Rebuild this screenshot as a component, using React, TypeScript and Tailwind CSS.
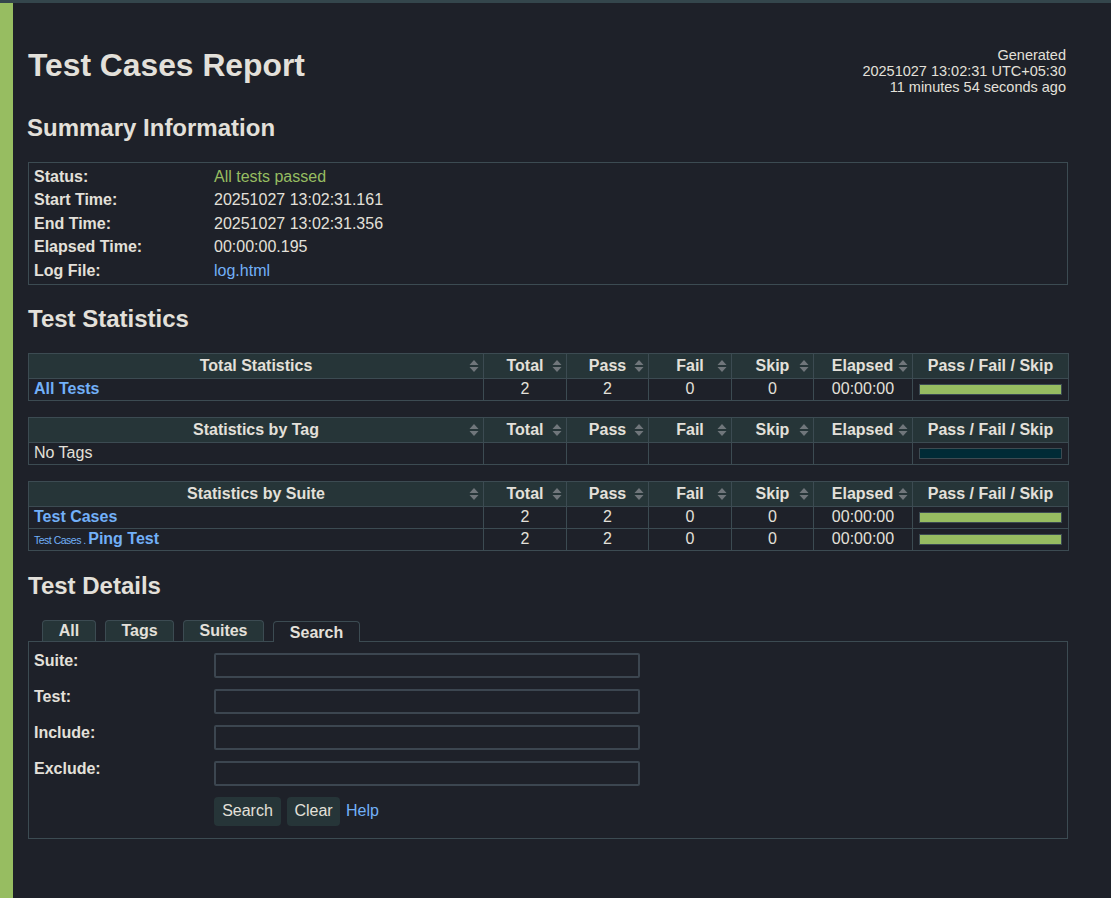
import React from 'react';

const font = "font-['Liberation_Sans',Arial,sans-serif]";

const SortIcon: React.FC = () => (
    <svg className="absolute right-[4px] top-1/2 -translate-y-1/2" width="10" height="13" viewBox="0 0 10 13">
        <path d="M5 0.5 L9.5 5.5 L0.5 5.5 Z" fill="#70767b" />
        <path d="M5 12.5 L9.5 7.5 L0.5 7.5 Z" fill="#70767b" />
    </svg>
);

const Bar: React.FC<{ pass: boolean }> = ({ pass }) => (
    <div className={`mx-auto h-[11px] w-[143px] border border-[#3c4b52] ${pass ? 'bg-[#97bd61]' : 'bg-[#002b36]'}`} />
);

type Row = { name: React.ReactNode; total?: string; pass?: string; fail?: string; skip?: string; elapsed?: string; bar: boolean };

const StatTable: React.FC<{ title: string; rows: Row[] }> = ({ title, rows }) => {
    const cols = ['Total', 'Pass', 'Fail', 'Skip', 'Elapsed'];
    const widths = ['w-[83px]', 'w-[82px]', 'w-[83px]', 'w-[82px]', 'w-[99px]'];
    return (
        <table className="w-[1040px] table-fixed border-collapse text-[16px] leading-[18px]">
            <colgroup>
                <col className="w-[455px]" />
                {widths.map((w, i) => <col key={i} className={w} />)}
                <col className="w-[156px]" />
            </colgroup>
            <thead>
                <tr className="h-[25px] bg-[#263538]">
                    <th className="relative border border-[#3c4b52] font-bold text-[#e3e0da]">
                        {title}
                        <SortIcon />
                    </th>
                    {cols.map((c) => (
                        <th key={c} className="relative border border-[#3c4b52] font-bold text-[#e3e0da]">
                            <span className={c === 'Elapsed' ? 'pr-[1px]' : ''}>{c}</span>
                            <SortIcon />
                        </th>
                    ))}
                    <th className="border border-[#3c4b52] font-bold text-[#e3e0da]">Pass / Fail / Skip</th>
                </tr>
            </thead>
            <tbody>
                {rows.map((r, i) => (
                    <tr key={i} className="h-[22px]">
                        <td className="border border-[#3c4b52] px-[5px] text-left">{r.name}</td>
                        <td className="border border-[#3c4b52] text-center">{r.total}</td>
                        <td className="border border-[#3c4b52] text-center">{r.pass}</td>
                        <td className="border border-[#3c4b52] text-center">{r.fail}</td>
                        <td className="border border-[#3c4b52] text-center">{r.skip}</td>
                        <td className="border border-[#3c4b52] text-center">{r.elapsed}</td>
                        <td className="border border-[#3c4b52]"><Bar pass={r.bar} /></td>
                    </tr>
                ))}
            </tbody>
        </table>
    );
};

const link = 'text-[#72b0f8]';

const App: React.FC = () => {
    const summary: [string, React.ReactNode][] = [
        ['Status:', <span className="text-[#97bd61]">All tests passed</span>],
        ['Start Time:', '20251027 13:02:31.161'],
        ['End Time:', '20251027 13:02:31.356'],
        ['Elapsed Time:', '00:00:00.195'],
        ['Log File:', <span className={link}>log.html</span>],
    ];

    const searchFields = ['Suite:', 'Test:', 'Include:', 'Exclude:'];

    return (
        <div className={`min-h-screen bg-[#1e2129] text-[#e3e0da] ${font}`}>
            <div className="h-[3px] bg-[#34464c]" />
            <div className="flex min-h-[895px]">
                <div className="w-[13px] shrink-0 bg-[#97bd61]" />
                <div className="w-[1055px] pl-[15px] pt-[44px] pb-[40px]">
                    {/* header */}
                    <div className="flex items-start justify-between pr-[2px]">
                        <h1 className="text-[31.8px] font-bold leading-[36px]">Test Cases Report</h1>
                        <div className="text-right text-[14.5px] leading-[16px]">
                            <div>Generated</div>
                            <div>20251027 13:02:31 UTC+05:30</div>
                            <div>11 minutes 54 seconds ago</div>
                        </div>
                    </div>

                    <h2 className="mt-[19px] ml-[-1px] text-[24px] font-bold leading-[28px]">Summary Information</h2>
                    <div className="mt-[20px] border border-[#3c4b52] px-[5px] pt-[2px] pb-[1px] text-[16px]">
                        {summary.map(([k, v]) => (
                            <div key={k} className="flex h-[23.5px] items-center">
                                <div className="w-[180px] font-bold">{k}</div>
                                <div>{v}</div>
                            </div>
                        ))}
                    </div>

                    <h2 className="mt-[20px] text-[24px] font-bold leading-[28px]">Test Statistics</h2>
                    <div className="mt-[20px] flex flex-col gap-[16px]">
                        <StatTable
                            title="Total Statistics"
                            rows={[{ name: <span className={`${link} font-bold`}>All Tests</span>, total: '2', pass: '2', fail: '0', skip: '0', elapsed: '00:00:00', bar: true }]}
                        />
                        <StatTable title="Statistics by Tag" rows={[{ name: 'No Tags', bar: false }]} />
                        <StatTable
                            title="Statistics by Suite"
                            rows={[
                                { name: <span className={`${link} font-bold`}>Test Cases</span>, total: '2', pass: '2', fail: '0', skip: '0', elapsed: '00:00:00', bar: true },
                                {
                                    name: (
                                        <span className={link}>
                                            <span className="text-[10.5px] tracking-[-0.5px]">Test Cases . </span>
                                            <span className="font-bold">Ping Test</span>
                                        </span>
                                    ),
                                    total: '2', pass: '2', fail: '0', skip: '0', elapsed: '00:00:00', bar: true,
                                },
                            ]}
                        />
                    </div>

                    <h2 className="mt-[21px] text-[24px] font-bold leading-[28px]">Test Details</h2>
                    <div className="mt-[20px] flex items-end gap-[9px] pl-[14px] text-[16px] font-bold">
                        {['All', 'Tags', 'Suites'].map((t, i) => (
                            <div
                                key={t}
                                className={`flex h-[21px] items-center justify-center rounded-t-[4px] border border-b-0 border-[#3c4b52] bg-[#263538] ${['w-[54px]', 'w-[69px]', 'w-[81px]'][i]}`}
                            >
                                {t}
                            </div>
                        ))}
                        <div className="relative -mb-[1px] flex h-[21px] w-[87px] items-center justify-center rounded-t-[4px] border border-b-0 border-[#3c4b52] bg-[#1e2129] pt-[2px]">
                            Search
                        </div>
                    </div>
                    <div className="border border-[#3c4b52] pl-[5px] pt-[11px] pb-[12px] text-[16px]">
                        {searchFields.map((f) => (
                            <div key={f} className="mb-[11px] flex items-start">
                                <div className="w-[180px] font-bold leading-[16px]">{f}</div>
                                <input className="h-[25px] w-[426px] rounded-[2px] border-2 border-[#3c4650] bg-[#1e2129] outline-none" />
                            </div>
                        ))}
                        <div className="flex items-center gap-[6px] pl-[180px]">
                            <button className="h-[29px] w-[67px] rounded-[4px] bg-[#263538] text-[#e3e0da]">Search</button>
                            <button className="h-[29px] w-[53px] rounded-[4px] bg-[#263538] text-[#e3e0da]">Clear</button>
                            <span className={link}>Help</span>
                        </div>
                    </div>
                </div>
            </div>
        </div>
    );
};

export default App;
